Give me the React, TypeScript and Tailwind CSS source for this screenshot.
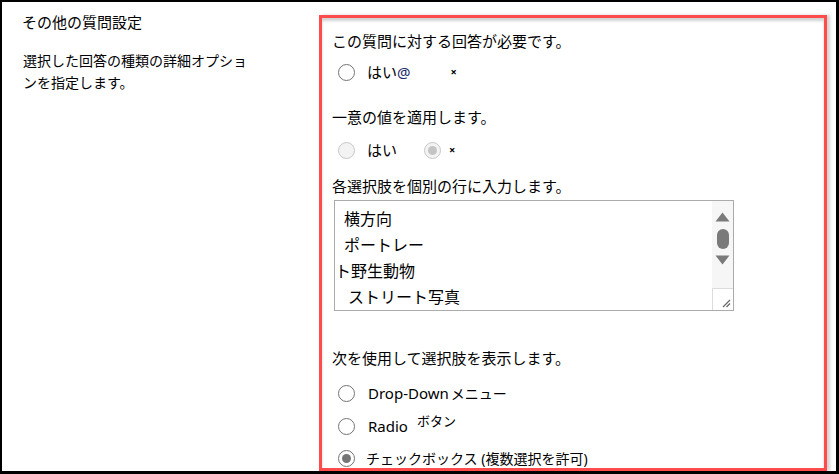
import React from "react";

interface RadioProps {
    checked?: boolean;
    disabled?: boolean;
}

function Radio({ checked = false, disabled = false }: RadioProps) {
    const ring = disabled ? "border-[#c8c8c8] bg-[#f3f3f3]" : "border-[#737373] bg-white";
    const dot = disabled ? "bg-[#c4c4c4]" : "bg-[#767676]";
    return (
        <span className={`flex h-[17px] w-[17px] shrink-0 items-center justify-center rounded-full border-[1.5px] ${ring}`}>
            {checked && <span className={`h-[9px] w-[9px] rounded-full ${dot}`} />}
        </span>
    );
}

function Heading({ children, className = "" }: { children: React.ReactNode; className?: string }) {
    return <div className={`h-[24px] text-[15px] leading-[24px] text-black ${className}`}>{children}</div>;
}

function ChoiceList() {
    const lines = [
        { text: "横方向", pad: "pl-[9px]" },
        { text: "ポートレー", pad: "pl-[9px]" },
        { text: "ト野生動物", pad: "pl-0" },
        { text: "ストリート写真", pad: "pl-[13px]" },
    ];

    return (
        <div className="mt-[2px] ml-[2px] flex h-[111px] w-[400px] border border-[#ababab] bg-white">
            <div className="flex-1 pt-[5px]">
                {lines.map((line, i) => (
                    <div key={i} className={`h-[26px] text-[16px] leading-[26px] text-black ${line.pad}`}>
                        {line.text}
                    </div>
                ))}
            </div>
            <div className="flex w-[21px] flex-col bg-[#f6f6f6]">
                <div className="flex flex-1 flex-col items-center pt-[11px]">
                    <svg width="15" height="10" viewBox="0 0 15 10">
                        <path d="M7.5 0.5 L14.5 9.5 L0.5 9.5 Z" fill="#7a7a7a" />
                    </svg>
                    <div className="mt-[7px] h-[20px] w-[12px] rounded-[6px] bg-[#7a7a7a]" />
                    <svg className="mt-[6px]" width="15" height="10" viewBox="0 0 15 10">
                        <path d="M0.5 0.5 L14.5 0.5 L7.5 9.5 Z" fill="#7a7a7a" />
                    </svg>
                </div>
                <div className="relative h-[22px] border-t border-l border-[#dcdcdc] bg-white">
                    <svg className="absolute right-[2px] bottom-[2px]" width="10" height="10" viewBox="0 0 10 10">
                        <path d="M9 2 L2 9 M9 5.5 L5.5 9" stroke="#666" strokeWidth="1.2" />
                    </svg>
                </div>
            </div>
        </div>
    );
}

export default function App() {
    return (
        <div className="flex h-[474px] w-[839px] overflow-hidden border-t-2 border-r-[3px] border-b-[3px] border-l-2 border-black bg-white font-['Noto_Sans','Noto_Sans_CJK_JP',sans-serif] text-black">
            <div className="w-[317px] pt-[8px] pl-[20px]">
                <div className="h-[24px] text-[15px] leading-[24px]">その他の質問設定</div>
                <div className="mt-[16px] pl-[1px] text-[14px] leading-[22px]">
                    選択した回答の種類の詳細オプショ
                    <br />
                    ンを指定します。
                </div>
            </div>

            <div className="mt-[13px] h-[456px] w-[508px] overflow-hidden border-[3px] border-[#ff4b4b] pl-[10px] shadow-[3px_0_3px_rgba(0,0,0,0.18),inset_0_3px_3px_rgba(0,0,0,0.18)]">
                <Heading className="mt-[11px]">この質問に対する回答が必要です。</Heading>
                <div className="mt-[4px] flex h-[30px] items-center pl-[6px]">
                    <Radio />
                    <span className="ml-[12px] text-[15px]">
                        はい<span className="text-[#1b2a6b]">@</span>
                    </span>
                    <span className="ml-[40px] text-[11px] font-bold">×</span>
                </div>

                <Heading className="mt-[18px]">一意の値を適用します。</Heading>
                <div className="mt-[6px] flex h-[30px] items-center pl-[6px]">
                    <Radio disabled />
                    <span className="ml-[12px] text-[15px]">はい</span>
                    <span className="ml-[27px]">
                        <Radio checked disabled />
                    </span>
                    <span className="ml-[8px] text-[11px] font-bold">×</span>
                </div>

                <Heading className="mt-[9px]">各選択肢を個別の行に入力します。</Heading>
                <ChoiceList />

                <Heading className="mt-[35px]">次を使用して選択肢を表示します。</Heading>
                <div className="mt-[8px] flex h-[30px] items-center pl-[6px]">
                    <Radio />
                    <span className="ml-[13px] text-[15px]">Drop-Down</span>
                    <span className="ml-[2px] text-[14px]">メニュー</span>
                </div>
                <div className="mt-[3px] flex h-[30px] items-center pl-[6px]">
                    <Radio />
                    <span className="ml-[13px] text-[15px]">Radio</span>
                    <span className="mb-[8px] ml-[9px] text-[13px]">ボタン</span>
                </div>
                <div className="mt-[2px] flex h-[30px] items-center pl-[6px]">
                    <Radio checked />
                    <span className="ml-[11px] text-[14px]">チェックボックス (複数選択を許可)</span>
                </div>
            </div>
        </div>
    );
}
